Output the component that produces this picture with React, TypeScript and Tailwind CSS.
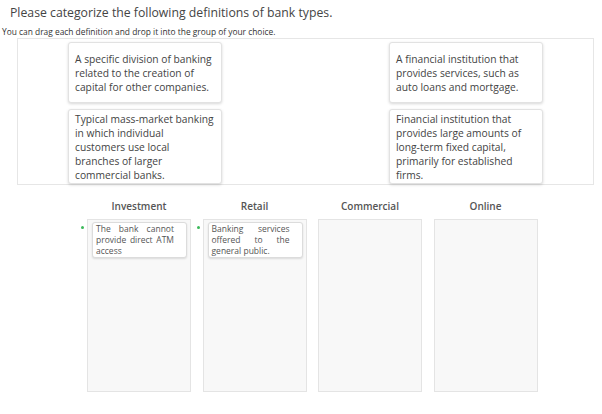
import React from "react";

const font = { fontFamily: '"Open Sans", "Liberation Sans", sans-serif' };

type Def = { text: string };

const leftDefs: Def[] = [
  { text: "A specific division of banking related to the creation of capital for other companies." },
  { text: "Typical mass-market banking in which individual customers use local branches of larger commercial banks." },
];

const rightDefs: Def[] = [
  { text: "A financial institution that provides services, such as auto loans and mortgage." },
  { text: "Financial institution that provides large amounts of long-term fixed capital, primarily for established firms." },
];

const groups: { name: string; items: string[] }[] = [
  { name: "Investment", items: ["The bank cannot provide direct ATM access"] },
  { name: "Retail", items: ["Banking services offered to the general public."] },
  { name: "Commercial", items: [] },
  { name: "Online", items: [] },
];

function DefCard({ text, tall }: { text: string; tall?: boolean }) {
  return (
    <div
      className={`w-[154px] ${tall ? "h-[78px]" : "h-[64px]"} flex items-center rounded-[3px] border border-[#e2e2e2] bg-white px-[6px] shadow-[0_1px_3px_rgba(0,0,0,0.16)]`}
    >
      <p className="text-[10.25px] leading-[14px] text-[#444]">{text}</p>
    </div>
  );
}

function DefColumn({ defs }: { defs: Def[] }) {
  return (
    <div className="flex flex-col gap-[6px]">
      <DefCard text={defs[0].text} />
      <DefCard text={defs[1].text} tall />
    </div>
  );
}

export default function App() {
  return (
    <div className="w-[602px] h-[414px] bg-white overflow-hidden" style={font}>
      <h1 className="pt-[4px] pl-[10px] text-[12.25px] leading-[18px] font-normal text-[#444]">
        Please categorize the following definitions of bank types.
      </h1>
      <p className="mt-[4px] pl-[2px] text-[8.4px] leading-[11px] text-[#333]">
        You can drag each definition and drop it into the group of your choice.
      </p>

      <div className="mt-[1px] ml-[17px] w-[577px] h-[147px] border border-[#e6e6e6] flex justify-between px-[50px] pt-[3px]">
        <DefColumn defs={leftDefs} />
        <DefColumn defs={rightDefs} />
      </div>

      <div className="mt-[14px] ml-[87px] flex gap-[11.5px]">
        {groups.map((g) => (
          <div key={g.name} className="w-[104px] flex flex-col items-center">
            <div className="text-[10px] leading-[14px] font-semibold text-[#555]">{g.name}</div>
            <div className="mt-[6px] w-full h-[173px] border border-[#e4e4e4] bg-[#f8f8f8] pt-[2px]">
              {g.items.map((t) => (
                <div
                  key={t}
                  className="relative ml-[4px] mr-[3px] h-[36px] rounded-[3px] border border-[#dcdcdc] bg-white pl-[3px] pr-[12px] pt-[1px] shadow-[0_1px_2px_rgba(0,0,0,0.12)]"
                >
                  <span className="absolute left-[-12px] top-[3px] h-[3px] w-[3px] rounded-full bg-[#3cb95a]" />
                  <p className="text-[8.5px] leading-[10.8px] text-[#555] text-justify">{t}</p>
                </div>
              ))}
            </div>
          </div>
        ))}
      </div>
    </div>
  );
}
